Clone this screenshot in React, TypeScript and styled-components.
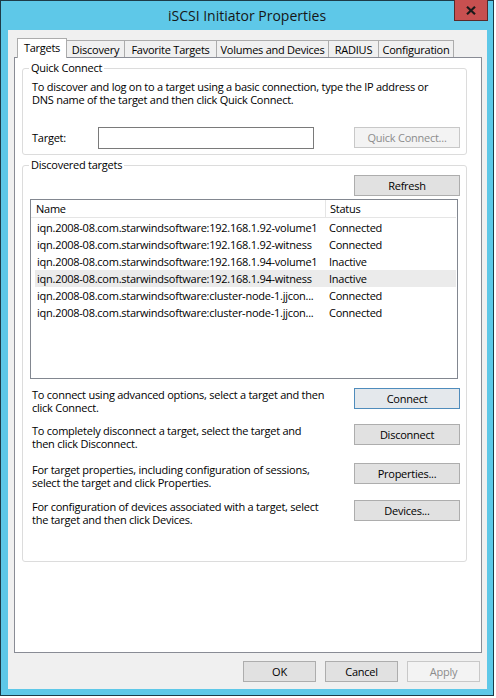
import React from 'react';
import styled, { createGlobalStyle, css } from 'styled-components';

const Global = createGlobalStyle`
  html, body { margin: 0; padding: 0; background: #ffffff; }
  body {
    font-family: "Open Sans", "Noto Sans", sans-serif;
    font-size: 11px;
    letter-spacing: -0.25px;
    color: #000;
  }
  * { box-sizing: border-box; }
`;

const Window = styled.div`
  width: 494px;
  height: 696px;
  border: 1px solid #1d3b48;
  background: #5ec8e8;
  display: flex;
  flex-direction: column;
`;

const TitleBar = styled.div`
  height: 29px;
  flex: none;
  display: grid;
  grid-template-columns: 1fr auto 1fr;
  align-items: start;
`;

const Title = styled.div`
  grid-column: 2;
  font-size: 14px;
  letter-spacing: 0;
  line-height: 29px;
  color: #161616;
  white-space: nowrap;
`;

const CloseButton = styled.div`
  grid-column: 3;
  justify-self: end;
  margin-top: -1px;
  margin-right: 5px;
  width: 34px;
  height: 21px;
  background: #c75050;
  border: 1px solid #5a2a2a;
  border-top: none;
  display: flex;
  align-items: center;
  justify-content: center;
`;

const Client = styled.div`
  flex: 1;
  margin: 0 6px 6px 7px;
  background: #f0f0f0;
  padding: 8px 5px 7px 6px;
  display: flex;
  flex-direction: column;
  min-height: 0;
`;

const TabStrip = styled.div`
  height: 19px;
  flex: none;
  display: flex;
  align-items: flex-end;
  padding-left: 3px;
  position: relative;
  z-index: 1;
`;

const Tab = styled.div<{ $w: number; $active?: boolean }>`
  width: ${p => p.$w}px;
  height: 17px;
  border: 1px solid #acacac;
  border-bottom: none;
  margin-left: -1px;
  background: #f0f0f0;
  display: flex;
  align-items: center;
  justify-content: center;
  white-space: nowrap;
  padding-top: 1px;
  &:first-child { margin-left: 0; }
  ${p =>
    p.$active &&
    css`
      height: 20px;
      margin-bottom: -1px;
      background: #ffffff;
      padding-top: 0;
      padding-bottom: 2px;
      z-index: 2;
    `}
`;

const Panel = styled.div`
  flex: 1;
  background: #ffffff;
  border: 1px solid #898c95;
  display: flex;
  flex-direction: column;
  min-height: 0;
`;

const Group = styled.div<{ $pad: string; $mt: number }>`
  position: relative;
  margin: ${p => p.$mt}px 14px 0 7px;
  border: 1px solid #dcdcdc;
  border-radius: 3px;
  padding: ${p => p.$pad};
  display: flex;
  flex-direction: column;
`;

const Legend = styled.span`
  position: absolute;
  top: -8px;
  left: 6px;
  padding: 0 2px;
  background: #ffffff;
  line-height: 14px;
  white-space: nowrap;
`;

const Para = styled.div`
  line-height: 13px;
  white-space: nowrap;
`;

const TargetRow = styled.div`
  margin-top: 21px;
  height: 21px;
  display: flex;
  align-items: center;
`;

const Label = styled.span`
  width: 66px;
`;

const Input = styled.div`
  width: 216px;
  height: 22px;
  border: 1px solid #7a7a7a;
  background: #ffffff;
`;

const Button = styled.div<{ $w: number; $disabled?: boolean; $default?: boolean }>`
  width: ${p => p.$w}px;
  height: 21px;
  flex: none;
  border: 1px solid #adadad;
  background: #e1e1e1;
  color: #000;
  display: flex;
  align-items: center;
  justify-content: center;
  white-space: nowrap;
  margin-left: auto;
  ${p =>
    p.$disabled &&
    css`
      border-color: #c8c8c8;
      background: #f3f3f3;
      color: #8c8c8c;
    `}
  ${p =>
    p.$default &&
    css`
      border-color: #4f8cbc;
      background: #e4e8ec;
    `}
`;

const List = styled.div`
  margin: 3px 2px 0 -2px;
  height: 180px;
  border: 1px solid #828790;
  background: #ffffff;
  display: flex;
  flex-direction: column;
`;

const ListHeader = styled.div`
  height: 18px;
  flex: none;
  display: grid;
  grid-template-columns: 294px 1fr;
  border-bottom: 1px solid #e5e5e5;
  margin-right: 1px;
`;

const HeaderCell = styled.div<{ $pl: number }>`
  padding-left: ${p => p.$pl}px;
  line-height: 17px;
  & + & { border-left: 1px solid #e5e5e5; }
`;

const Rows = styled.div`
  padding-top: 1px;
`;

const Row = styled.div<{ $sel?: boolean }>`
  height: 17px;
  margin: 0 1px 0 4px;
  display: grid;
  grid-template-columns: 289px 1fr;
  align-items: center;
  background: ${p => (p.$sel ? '#ebebeb' : 'transparent')};
`;

const Cell = styled.div<{ $pl: number }>`
  padding-left: ${p => p.$pl}px;
  white-space: nowrap;
  overflow: hidden;
`;

const Action = styled.div<{ $mt: number }>`
  margin-top: ${p => p.$mt}px;
  display: grid;
  grid-template-columns: 1fr 106px;
  align-items: start;
`;

const Footer = styled.div`
  margin-top: 8px;
  flex: none;
  display: flex;
  justify-content: flex-end;
  gap: 9px;
  padding-right: 2px;
`;

const FooterButton = styled(Button)`
  margin-left: 0;
`;

const targets: [string, string][] = [
  ['iqn.2008-08.com.starwindsoftware:192.168.1.92-volume1', 'Connected'],
  ['iqn.2008-08.com.starwindsoftware:192.168.1.92-witness', 'Connected'],
  ['iqn.2008-08.com.starwindsoftware:192.168.1.94-volume1', 'Inactive'],
  ['iqn.2008-08.com.starwindsoftware:192.168.1.94-witness', 'Inactive'],
  ['iqn.2008-08.com.starwindsoftware:cluster-node-1.jjcon...', 'Connected'],
  ['iqn.2008-08.com.starwindsoftware:cluster-node-1.jjcon...', 'Connected'],
];

const actions: { lines: [string, string]; label: string; mt: number; def?: boolean }[] = [
  { lines: ['To connect using advanced options, select a target and then', 'click Connect.'], label: 'Connect', mt: 9, def: true },
  { lines: ['To completely disconnect a target, select the target and', 'then click Disconnect.'], label: 'Disconnect', mt: 10 },
  { lines: ['For target properties, including configuration of sessions,', 'select the target and click Properties.'], label: 'Properties...', mt: 13 },
  { lines: ['For configuration of devices associated with a target, select', 'the target and then click Devices.'], label: 'Devices...', mt: 11 },
];

export default function App() {
  return (
    <>
      <Global />
      <Window>
        <TitleBar>
          <Title>iSCSI Initiator Properties</Title>
          <CloseButton>
            <svg width="10" height="9" viewBox="0 0 10 9">
              <path d="M1 0.8 L9 8.2 M9 0.8 L1 8.2" stroke="#1a1a1a" strokeWidth="2.2" />
            </svg>
          </CloseButton>
        </TitleBar>
        <Client>
          <TabStrip>
            <Tab $w={50} $active>Targets</Tab>
            <Tab $w={59}>Discovery</Tab>
            <Tab $w={93}>Favorite Targets</Tab>
            <Tab $w={113}>Volumes and Devices</Tab>
            <Tab $w={51}>RADIUS</Tab>
            <Tab $w={76}>Configuration</Tab>
          </TabStrip>
          <Panel>
            <Group $mt={10} $pad="11px 6px 6px 9px">
              <Legend>Quick Connect</Legend>
              <Para>To discover and log on to a target using a basic connection, type the IP address or</Para>
              <Para>DNS name of the target and then click Quick Connect.</Para>
              <TargetRow>
                <Label>Target:</Label>
                <Input />
                <Button $w={106} $disabled>Quick Connect...</Button>
              </TargetRow>
            </Group>
            <Group $mt={10} $pad="9px 6px 35px 9px">
              <Legend>Discovered targets</Legend>
              <Button $w={106}>Refresh</Button>
              <List>
                <ListHeader>
                  <HeaderCell $pl={5}>Name</HeaderCell>
                  <HeaderCell $pl={4}>Status</HeaderCell>
                </ListHeader>
                <Rows>
                  {targets.map(([name, status], i) => (
                    <Row key={i} $sel={i === 3}>
                      <Cell $pl={2}>{name}</Cell>
                      <Cell $pl={5}>{status}</Cell>
                    </Row>
                  ))}
                </Rows>
              </List>
              {actions.map(a => (
                <Action key={a.label} $mt={a.mt}>
                  <div>
                    <Para>{a.lines[0]}</Para>
                    <Para>{a.lines[1]}</Para>
                  </div>
                  <Button $w={106} $default={a.def}>{a.label}</Button>
                </Action>
              ))}
            </Group>
          </Panel>
          <Footer>
            <FooterButton $w={73}>OK</FooterButton>
            <FooterButton $w={73}>Cancel</FooterButton>
            <FooterButton $w={73} $disabled>Apply</FooterButton>
          </Footer>
        </Client>
      </Window>
    </>
  );
}
